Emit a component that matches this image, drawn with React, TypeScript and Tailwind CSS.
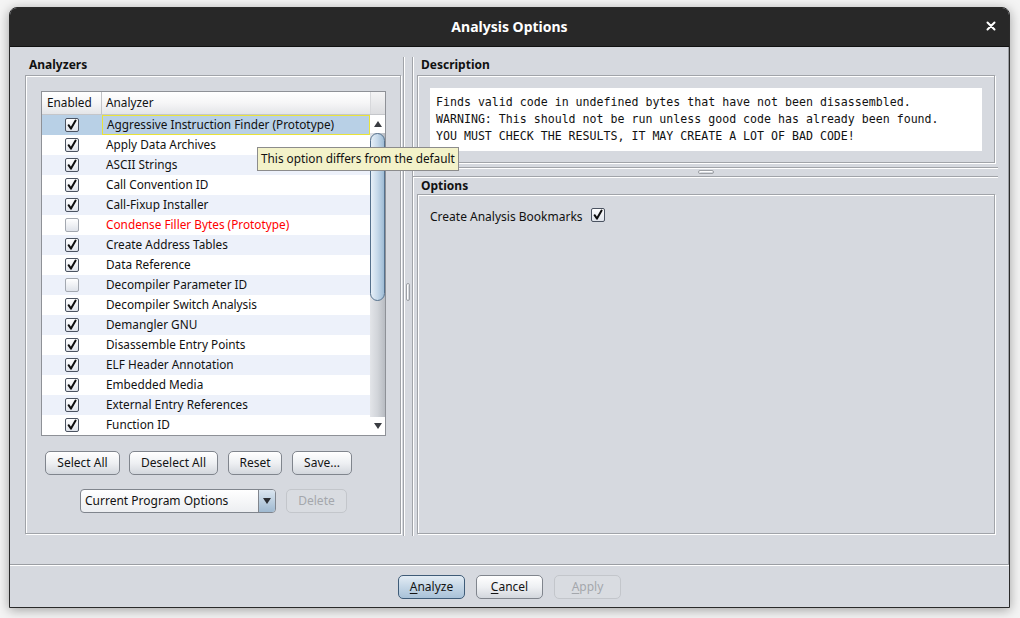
import React from "react";

const rows: { name: string; on: boolean; red?: boolean }[] = [
  { name: "Aggressive Instruction Finder (Prototype)", on: true },
  { name: "Apply Data Archives", on: true },
  { name: "ASCII Strings", on: true },
  { name: "Call Convention ID", on: true },
  { name: "Call-Fixup Installer", on: true },
  { name: "Condense Filler Bytes (Prototype)", on: false, red: true },
  { name: "Create Address Tables", on: true },
  { name: "Data Reference", on: true },
  { name: "Decompiler Parameter ID", on: false },
  { name: "Decompiler Switch Analysis", on: true },
  { name: "Demangler GNU", on: true },
  { name: "Disassemble Entry Points", on: true },
  { name: "ELF Header Annotation", on: true },
  { name: "Embedded Media", on: true },
  { name: "External Entry References", on: true },
  { name: "Function ID", on: true },
];

function Check({ on }: { on: boolean }) {
  return (
    <span
      className={`inline-flex items-center justify-center w-[14px] h-[14px] rounded-[2px] border ${
        on ? "border-[#4b5361]" : "border-[#a3a8b0]"
      } bg-gradient-to-b from-[#ffffff] to-[#dfe3ea]`}
    >
      {on && (
        <svg width="12" height="12" viewBox="0 0 12 12">
          <path
            d="M2.6 6.2 L5 9.6 L9.6 1.6"
            fill="none"
            stroke="#0f0f0f"
            strokeWidth="2"
            strokeLinecap="round"
            strokeLinejoin="round"
          />
        </svg>
      )}
    </span>
  );
}

function Btn({
  children,
  className = "",
  kind = "normal",
}: {
  children: React.ReactNode;
  className?: string;
  kind?: "normal" | "default" | "disabled";
}) {
  const k =
    kind === "default"
      ? "border-[#3f5c78] bg-gradient-to-b from-[#e3ecf4] via-[#c4d6e6] to-[#a9c2d8] text-[#141414]"
      : kind === "disabled"
      ? "border-[#c3c6cb] bg-[#d9dce1] text-[#a4a7ac]"
      : "border-[#80858d] bg-gradient-to-b from-[#ffffff] via-[#eef0f3] to-[#d3d7dd] text-[#141414]";
  return (
    <div
      className={`h-[24px] flex items-center justify-center rounded-[5px] border text-[12px] ${k} ${className}`}
    >
      {children}
    </div>
  );
}

function GroupBox({ className = "", children }: { className?: string; children?: React.ReactNode }) {
  return (
    <div className={`border border-[#a1a4a9] shadow-[inset_1px_1px_0_#ffffff,1px_1px_0_#ffffff] ${className}`}>
      {children}
    </div>
  );
}

export default function App() {
  return (
    <div
      className="w-[1020px] h-[618px] bg-[#f4f4f4] pt-[7px] pl-[9px]"
      style={{ fontFamily: '"Noto Sans", "Open Sans", sans-serif' }}
    >
      <div className="relative w-[1001px] h-[601px] flex flex-col rounded-t-[8px] border border-[#2a2a2a] bg-[#d6d9df] shadow-[0_2px_12px_rgba(0,0,0,0.35)]">
        {/* Title bar */}
        <div className="h-[38px] rounded-t-[7px] bg-[#282828] flex items-center relative shrink-0">
          <div className="flex-1 text-center text-white font-bold text-[14px] -mt-[1px]">Analysis Options</div>
          <div className="absolute right-[11px] top-[11px] w-[14px] h-[14px] flex items-center justify-center">
            <svg width="10" height="10" viewBox="0 0 10 10">
              <path d="M1.5 1.5 L8.5 8.5 M8.5 1.5 L1.5 8.5" stroke="#ffffff" strokeWidth="2" strokeLinecap="round" />
            </svg>
          </div>
        </div>

        {/* Main panel */}
        <div className="h-[519px] border-t border-[#111] border-b border-b-[#9b9ea3] shadow-[inset_-1px_0_0_#9b9ea3,0_1px_0_#ffffff] flex pl-[15px] pr-[12px] pb-[30px] shrink-0">
          {/* Left column */}
          <div className="w-[376px] flex flex-col">
            <div className="h-[28px] flex items-end pb-[1px] pl-[4px] text-[12px] font-bold text-[#111]">Analyzers</div>
            <GroupBox className="flex-1 pt-[15px] px-[15px] flex flex-col">
              {/* Table */}
              <div className="w-[345px] h-[345px] border border-[#8e9197] bg-white flex flex-col">
                <div className="h-[23px] flex border-b border-[#c4c6ca] bg-gradient-to-b from-[#ffffff] via-[#f6f6f7] to-[#e4e5e8] text-[11.8px] text-[#111] shrink-0">
                  <div className="w-[60px] border-r border-[#c2c4c8] flex items-center pl-[5px]">Enabled</div>
                  <div className="w-[268px] flex items-center pl-[4px]">Analyzer</div>
                  <div className="flex-1 border-l border-[#d7d8db] bg-gradient-to-b from-[#f4f4f5] to-[#dcdde0]" />
                </div>
                <div className="flex flex-1">
                  <div className="w-[328px] flex flex-col">
                    {rows.map((r, i) => {
                      const sel = i === 0;
                      const bg = sel ? "bg-[#b8d0e6]" : i % 2 === 0 ? "bg-[#edf1fa]" : "bg-white";
                      return (
                        <div key={r.name} className={`h-[20px] flex ${bg} text-[11.8px]`}>
                          <div className="w-[60px] flex items-center justify-center">
                            <Check on={r.on} />
                          </div>
                          <div
                            className={`flex-1 flex items-center pl-[4px] ${
                              sel ? "border border-[#e9e33a] pl-[3px]" : ""
                            } ${r.red ? "text-[#ff0000]" : "text-[#111]"}`}
                          >
                            {r.name}
                          </div>
                        </div>
                      );
                    })}
                  </div>
                  {/* Scrollbar */}
                  <div className="flex-1 flex flex-col bg-gradient-to-r from-[#e3e5e9] via-[#d2d5da] to-[#b8bcc2]">
                    <div className="h-[18px] flex items-center justify-center bg-white">
                      <svg width="8" height="6" viewBox="0 0 8 6"><path d="M4 0 L8 6 L0 6 Z" fill="#3a3d42" /></svg>
                    </div>
                    <div className="h-[168px] rounded-[8px] border border-[#55718d] bg-gradient-to-r from-[#e7f0f8] via-[#c6d9ea] to-[#9fbcd5]" />
                    <div className="flex-1" />
                    <div className="h-[18px] flex items-center justify-center bg-white">
                      <svg width="8" height="6" viewBox="0 0 8 6"><path d="M0 0 L8 0 L4 6 Z" fill="#3a3d42" /></svg>
                    </div>
                  </div>
                </div>
              </div>
              {/* Buttons */}
              <div className="flex mt-[15px] pl-[4px]">
                <Btn className="w-[75px]">Select All</Btn>
                <Btn className="w-[89px] ml-[9px]">Deselect All</Btn>
                <Btn className="w-[54px] ml-[10px]">Reset</Btn>
                <Btn className="w-[60px] ml-[10px]">Save...</Btn>
              </div>
              <div className="flex mt-[14px] pl-[39px]">
                <div className="w-[196px] h-[24px] rounded-[4px] border border-[#80858d] bg-gradient-to-b from-[#ffffff] to-[#eceef1] flex overflow-hidden">
                  <div className="flex-1 flex items-center pl-[4px] text-[12px] text-[#111]">Current Program Options</div>
                  <div className="w-[17px] border-l border-[#80858d] bg-gradient-to-b from-[#dbe6f0] to-[#9fb9d0] flex items-center justify-center">
                    <svg width="8" height="6" viewBox="0 0 8 6"><path d="M0 0 L8 0 L4 6 Z" fill="#2b2e33" /></svg>
                  </div>
                </div>
                <Btn kind="disabled" className="w-[61px] ml-[10px]">Delete</Btn>
              </div>
            </GroupBox>
          </div>

          {/* Vertical splitter */}
          <div className="w-[16px] flex pt-[10px] -mb-[2px]">
            <div className="ml-[2px] w-[10px] border-l border-r border-[#a1a4a9] shadow-[inset_1px_0_0_#ffffff,1px_0_0_#ffffff] flex items-center justify-center">
              <div className="w-[4px] h-[18px] rounded-[2px] border border-[#9da0a5] shadow-[inset_1px_1px_0_#ffffff] mb-[10px]" />
            </div>
          </div>

          {/* Right column */}
          <div className="w-[578px] flex flex-col">
            <div className="h-[28px] flex items-end pb-[1px] pl-[4px] text-[12px] font-bold text-[#111]">Description</div>
            <GroupBox className="h-[88px] p-[12px]">
              <div
                className="bg-white h-[63px] px-[6px] py-[6px] text-[11.6px] leading-[17px] text-[#111] whitespace-pre"
                style={{ fontFamily: '"DejaVu Sans Mono", monospace' }}
              >
                {"Finds valid code in undefined bytes that have not been disassembled.\nWARNING: This should not be run unless good code has already been found.\nYOU MUST CHECK THE RESULTS, IT MAY CREATE A LOT OF BAD CODE!"}
              </div>
            </GroupBox>
            {/* Horizontal splitter */}
            <div className="-ml-[4px] -mr-[3px] mt-[4px] h-[10px] border-t border-b border-[#a1a4a9] shadow-[inset_0_1px_0_#ffffff,0_1px_0_#ffffff] flex items-center justify-center">
              <div className="w-[16px] h-[4px] rounded-[2px] border border-[#9da0a5] shadow-[inset_1px_1px_0_#ffffff]" />
            </div>
            <div className="h-[17px] flex items-center pl-[4px] text-[12px] font-bold text-[#111]">Options</div>
            <GroupBox className="flex-1 pt-[14px] pl-[12px]">
              <div className="flex items-center text-[12px] text-[#111] h-[16px]">
                <span>Create Analysis Bookmarks</span>
                <span className="ml-[8px]">
                  <Check on={true} />
                </span>
              </div>
            </GroupBox>
          </div>
        </div>

        {/* Bottom bar */}
        <div className="flex-1 flex items-center justify-center gap-[11px] pt-[2px]">
          <Btn kind="default" className="w-[67px]">
            <span>
              <span className="underline underline-offset-2">A</span>nalyze
            </span>
          </Btn>
          <Btn className="w-[67px]">
            <span>
              <span className="underline underline-offset-2">C</span>ancel
            </span>
          </Btn>
          <Btn kind="disabled" className="w-[67px]">
            <span>
              <span className="underline underline-offset-2">A</span>pply
            </span>
          </Btn>
        </div>

        {/* Tooltip */}
        <div className="absolute left-[247px] top-[139px] h-[24px] px-[3px] flex items-center border border-[#8c8c8c] bg-[#f3f2c9] text-[11.8px] text-[#111] whitespace-nowrap">
          This option differs from the default
        </div>
      </div>
    </div>
  );
}
